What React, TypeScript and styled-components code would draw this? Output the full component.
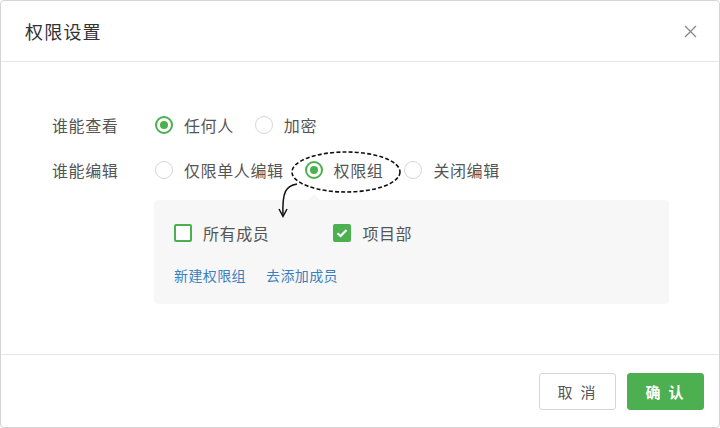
import styled, { createGlobalStyle } from "styled-components";
import { useState } from "react";

const GlobalStyle = createGlobalStyle`
  html, body {
    margin: 0;
    padding: 0;
    background: #fff;
  }
  body {
    font-family: "Liberation Sans", "Noto Sans CJK SC", sans-serif;
    color: #555;
  }
`;

const GREEN = "#4caf50";

type Opt = { value: string; label: string };

const viewOptions: Opt[] = [
  { value: "all", label: "任何人" },
  { value: "secret", label: "加密" },
];

const editOptions: Opt[] = [
  { value: "single", label: "仅限单人编辑" },
  { value: "group", label: "权限组" },
  { value: "closed", label: "关闭编辑" },
];

const groups = [
  { id: "all", label: "所有成员" },
  { id: "project", label: "项目部" },
];

const App = () => {
  const [view, setView] = useState("all");
  const [edit, setEdit] = useState("group");
  const [checked, setChecked] = useState<Record<string, boolean>>({
    all: false,
    project: true,
  });

  return (
    <>
      <GlobalStyle />
      <Dialog>
        <Header>
          <Title>权限设置</Title>
          <CloseButton aria-label="close">
            <svg width="13" height="13" viewBox="0 0 13 13">
              <path d="M1 1 L12 12 M12 1 L1 12" stroke="#8a8a8a" strokeWidth="1.3" />
            </svg>
          </CloseButton>
        </Header>

        <Body>
          <Row>
            <Label>谁能查看</Label>
            <Options>
              {viewOptions.map((o) => (
                <Radio key={o.value} onClick={() => setView(o.value)}>
                  <RadioDot $checked={view === o.value} />
                  <span>{o.label}</span>
                </Radio>
              ))}
            </Options>
          </Row>
          <Row>
            <Label>谁能编辑</Label>
            <Options>
              {editOptions.map((o) => (
                <Radio key={o.value} onClick={() => setEdit(o.value)}>
                  <RadioDot $checked={edit === o.value} />
                  <span>{o.label}</span>
                </Radio>
              ))}
            </Options>
          </Row>

          <GroupPanel>
            <CheckRow>
              {groups.map((g) => (
                <Check
                  key={g.id}
                  onClick={() => setChecked({ ...checked, [g.id]: !checked[g.id] })}
                >
                  <CheckBox $checked={checked[g.id]}>
                    {checked[g.id] && (
                      <svg width="12" height="10" viewBox="0 0 12 10">
                        <path
                          d="M1.5 5.2 L4.6 8 L10.5 2"
                          fill="none"
                          stroke="#fff"
                          strokeWidth="2.2"
                        />
                      </svg>
                    )}
                  </CheckBox>
                  <span>{g.label}</span>
                </Check>
              ))}
            </CheckRow>
            <LinkRow>
              <TextLink>新建权限组</TextLink>
              <TextLink>去添加成员</TextLink>
            </LinkRow>
          </GroupPanel>

          {/* 标注：圈出权限组 */}
          <Annotation width="140" height="80" viewBox="0 0 140 80">
            <ellipse
              cx="75"
              cy="22"
              rx="54"
              ry="20"
              fill="none"
              stroke="#111"
              strokeWidth="1.6"
              strokeDasharray="4 2.2"
            />
            <path
              d="M26 34 C 15 36, 11 41, 12 66"
              fill="none"
              stroke="#111"
              strokeWidth="1.5"
            />
            <path
              d="M8 59 L12 66.5 L16 59"
              fill="none"
              stroke="#111"
              strokeWidth="1.5"
            />
          </Annotation>
        </Body>

        <Footer>
          <Button>取 消</Button>
          <Button $primary>确 认</Button>
        </Footer>
      </Dialog>
    </>
  );
};

export default App;

const Dialog = styled.div`
  width: 720px;
  height: 428px;
  box-sizing: border-box;
  border: 1px solid #d4d4d4;
  border-radius: 4px;
  display: flex;
  flex-direction: column;
  background: #fff;
  overflow: hidden;
`;

const Header = styled.div`
  height: 61px;
  flex-shrink: 0;
  box-sizing: border-box;
  padding: 0 22px 0 24px;
  display: flex;
  align-items: center;
  justify-content: space-between;
  border-bottom: 1px solid #e6e6e6;
`;

const Title = styled.div`
  font-size: 18px;
  color: #333;
  letter-spacing: 1.2px;
`;

const CloseButton = styled.div`
  width: 13px;
  height: 13px;
  display: flex;
  cursor: pointer;
`;

const Body = styled.div`
  position: relative;
  flex: 1;
  padding: 48px 0 0 51px;
`;

const Row = styled.div`
  display: flex;
  align-items: center;
  height: 30px;
  margin-bottom: 15px;
  font-size: 16px;
  letter-spacing: 0.6px;
`;

const Label = styled.div`
  width: 103px;
  color: #555;
`;

const Options = styled.div`
  display: flex;
  align-items: center;
  gap: 21px;
`;

const Radio = styled.label`
  display: flex;
  align-items: center;
  gap: 11px;
  cursor: pointer;
  color: #555;
`;

const RadioDot = styled.span<{ $checked?: boolean }>`
  width: 18px;
  height: 18px;
  box-sizing: border-box;
  border-radius: 50%;
  border: ${({ $checked }) => ($checked ? `2px solid ${GREEN}` : "1.5px solid #d6d6d6")};
  display: flex;
  align-items: center;
  justify-content: center;

  &::after {
    content: "";
    display: ${({ $checked }) => ($checked ? "block" : "none")};
    width: 8px;
    height: 8px;
    border-radius: 50%;
    background: ${GREEN};
  }
`;

const GroupPanel = styled.div`
  position: relative;
  margin: 1px 0 0 102px;
  width: 515px;
  height: 104px;
  box-sizing: border-box;
  padding: 24px 20px 0;
  background: #f7f7f7;
  border-radius: 4px;

  &::before {
    content: "";
    position: absolute;
    top: -6px;
    left: 154px;
    border-left: 6px solid transparent;
    border-right: 6px solid transparent;
    border-bottom: 6px solid #f7f7f7;
  }
`;

const CheckRow = styled.div`
  display: flex;
  align-items: center;
  gap: 64px;
  height: 18px;
  font-size: 16px;
  letter-spacing: 0.6px;
`;

const Check = styled.label`
  display: flex;
  align-items: center;
  gap: 11px;
  cursor: pointer;
  color: #555;
`;

const CheckBox = styled.span<{ $checked?: boolean }>`
  width: 18px;
  height: 18px;
  box-sizing: border-box;
  border-radius: 2px;
  border: 2px solid ${GREEN};
  background: ${({ $checked }) => ($checked ? GREEN : "#fff")};
  display: flex;
  align-items: center;
  justify-content: center;
`;

const LinkRow = styled.div`
  display: flex;
  gap: 20px;
  margin-top: 23px;
  font-size: 14px;
  letter-spacing: 0.4px;
`;

const TextLink = styled.a`
  color: #3b7fc0;
  cursor: pointer;
`;

const Annotation = styled.svg`
  position: absolute;
  left: 270px;
  top: 88px;
  pointer-events: none;
`;

const Footer = styled.div`
  height: 73px;
  flex-shrink: 0;
  box-sizing: border-box;
  border-top: 1px solid #e6e6e6;
  padding: 0 15px 0 0;
  display: flex;
  align-items: center;
  justify-content: flex-end;
  gap: 11px;
`;

const Button = styled.button<{ $primary?: boolean }>`
  width: 77px;
  height: 37px;
  box-sizing: border-box;
  border-radius: 3px;
  font-family: inherit;
  font-size: 15px;
  letter-spacing: 2px;
  cursor: pointer;
  border: 1px solid ${({ $primary }) => ($primary ? GREEN : "#d6d6d6")};
  background: ${({ $primary }) => ($primary ? GREEN : "#fff")};
  color: ${({ $primary }) => ($primary ? "#fff" : "#555")};
  font-weight: ${({ $primary }) => ($primary ? 700 : 400)};
`;
